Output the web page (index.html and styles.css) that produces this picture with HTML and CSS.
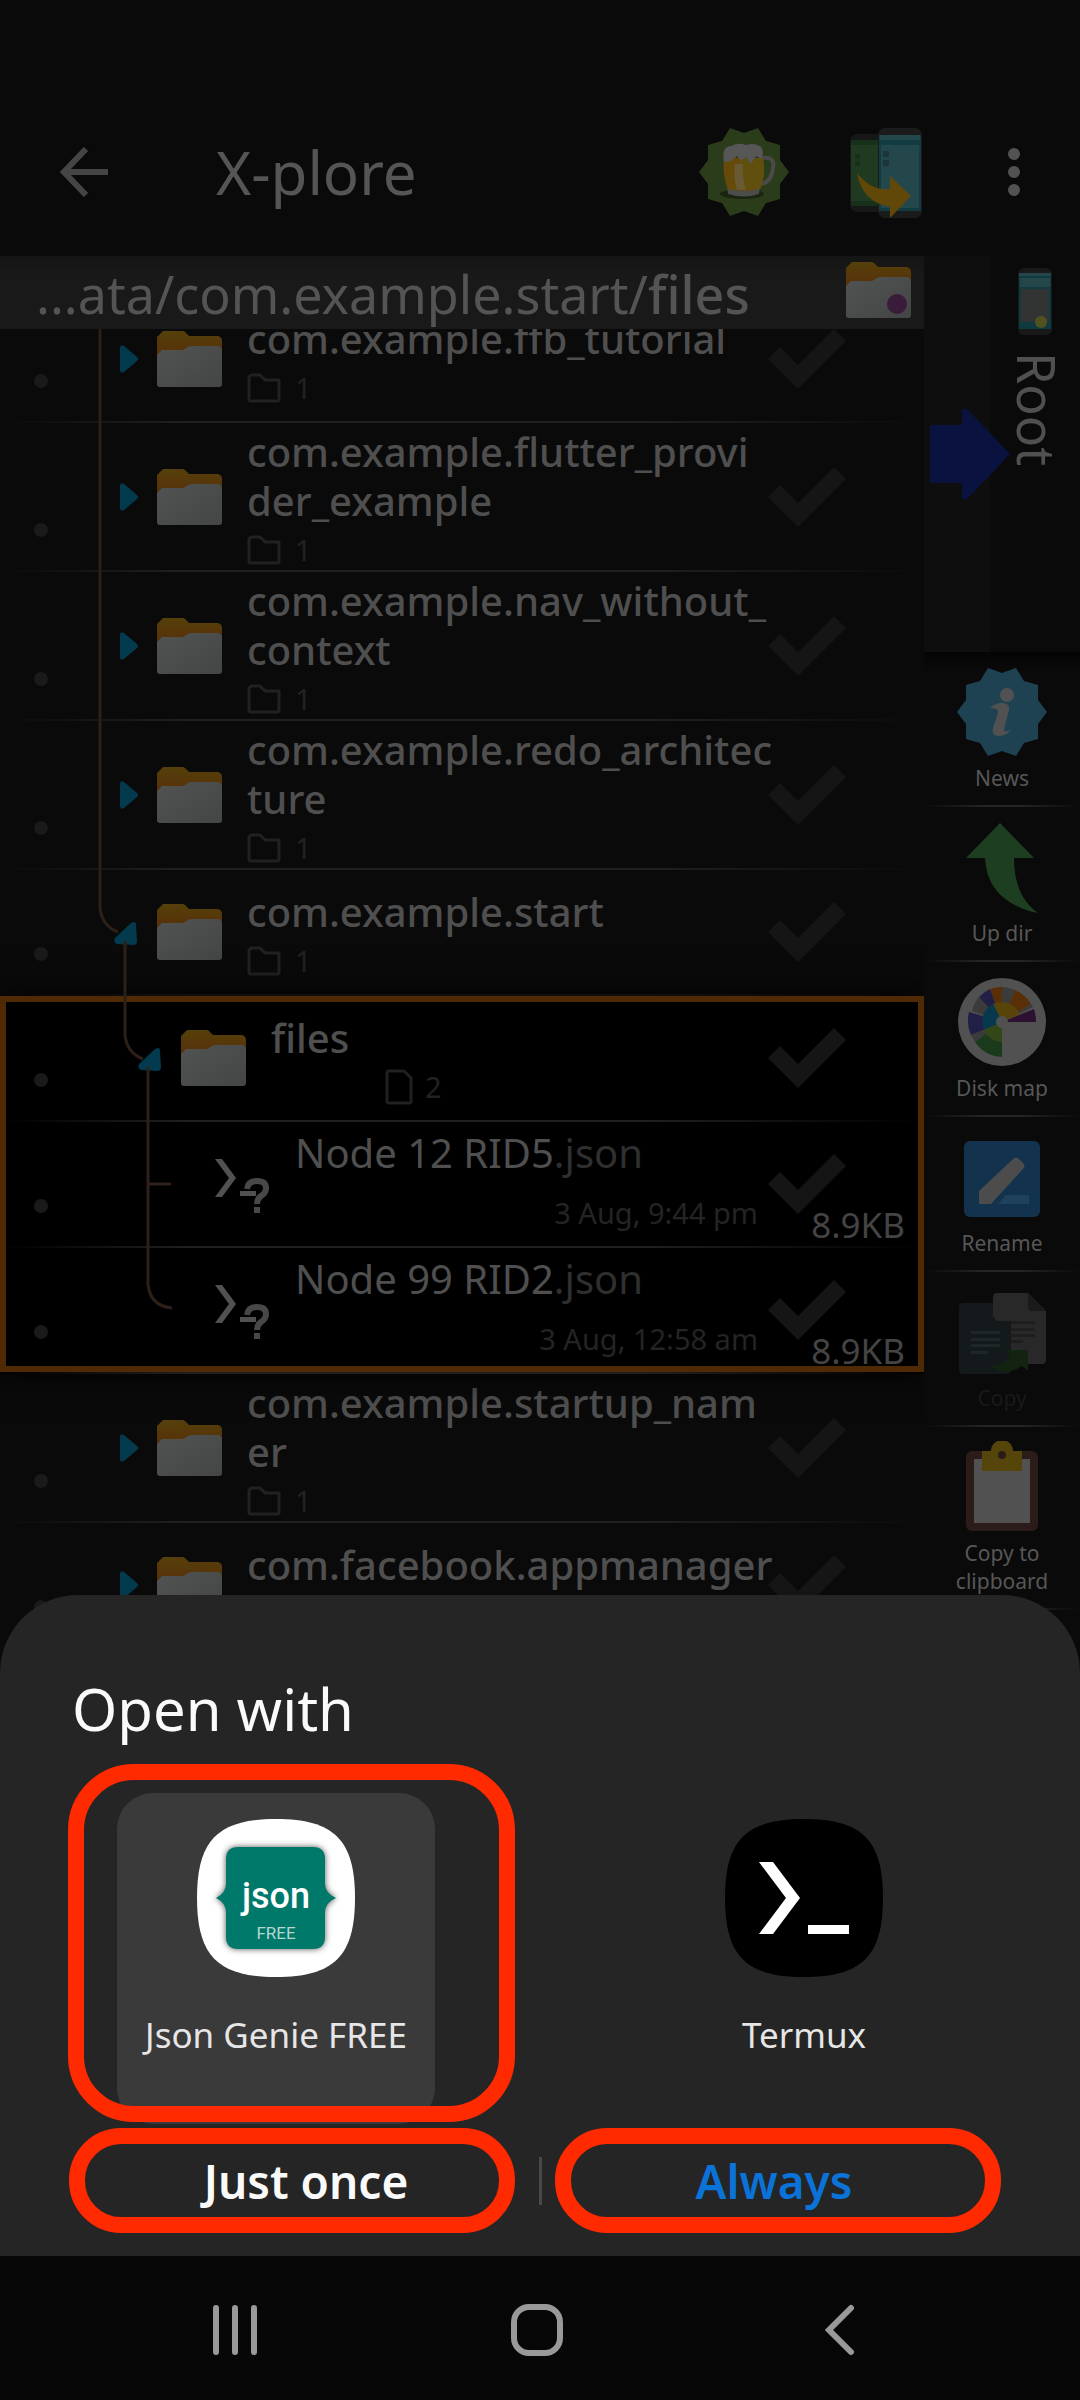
FILE: index.html
```html
<!DOCTYPE html>
<html lang="en">
<head>
<meta charset="utf-8">
<meta name="viewport" content="width=device-width, initial-scale=1">
<title>X-plore</title>
<link rel="stylesheet" href="styles.css">
</head>
<body>
<svg class="defs" aria-hidden="true">
  <defs>
    <linearGradient id="tab" x1="0" y1="0" x2="0" y2="1"><stop offset="0" stop-color="#55400a"/><stop offset="1" stop-color="#58300a"/></linearGradient>
    <linearGradient id="paper" x1="0" y1="0" x2="1" y2="1"><stop offset="0" stop-color="#515252"/><stop offset="1" stop-color="#444545"/></linearGradient>
    <symbol id="folder" viewBox="0 0 65 56">
      <path fill="url(#tab)" d="M0 24V6L6 0h19q2 0 3 1l4 4h29q4 1 4 5v14z"/>
      <path fill="url(#paper)" d="M0 24l5-5h20q2 0 3-1l3-2q2-1 4-1h27l3 3v35q0 3-3 3H3q-3 0-3-3z"/>
    </symbol>
    <symbol id="closed" viewBox="0 0 26 28"><path fill="#033a4d" d="M6 3q0-4 4-2l13 11q2 2 0 4L10 27q-4 2-4-2z"/></symbol>
    <symbol id="open" viewBox="0 0 26 28"><path fill="#033a4d" d="M17 5q5-3 5 2l1 16q0 4-4 4L3 26q-4-2-2-6z"/></symbol>
    <symbol id="check" viewBox="0 0 78 60"><path fill="#151515" d="M0 30l12-12 18 18L66 0l12 12-48 48z"/></symbol>
    <symbol id="minifolder" viewBox="0 0 34 30"><path fill="none" stroke="#212121" stroke-width="3" stroke-linejoin="round" d="M2 4l2-2h9l5 5h14v20l-1 1H3l-1-1z"/></symbol>
    <symbol id="minifile" viewBox="0 0 28 36"><path fill="none" stroke="#212121" stroke-width="3" stroke-linejoin="round" d="M2 3l1-1h16l7 7v24l-1 1H3l-1-1z"/></symbol>
    <symbol id="shellfile" viewBox="0 0 65 64">
      <path fill="#515151" d="M10 3h7l14 19-14 19h-7l14-19zM35 35h16v5H35z"/>
      <path fill="none" stroke="#484848" stroke-width="6" d="M42 33q1-8 10-8 9 0 9 7 0 5-5 8-4 3-4 8M52 51v6"/>
    </symbol>
  </defs>
</svg>

<div class="screen">
  <main class="app">
    <header class="topbar">
      <button class="icon-btn back" aria-label="Back">
        <svg width="48" height="50" viewBox="0 0 48 50"><path fill="none" stroke="#454545" stroke-width="6" d="M26 2L4 25l22 23M4 25h44"/></svg>
      </button>
      <h1>X-plore</h1>
      <button class="icon-btn" aria-label="Donate">
        <svg width="92" height="92" viewBox="-46 -46 92 92">
          <path fill="#2b3c1b" d="M45 0L36 12 36 27 22 31 14 44 0 39-14 44-22 31-36 27-36 12-45 0-36-12-36-27-22-31-14-44 0-39 14-44 22-31 36-27 36-12z"/>
          <ellipse cx="-2" cy="22" rx="22" ry="5" fill="#1a2411"/>
          <path fill="none" stroke="#4a4a49" stroke-width="4" d="M18-14q13-2 11 9-1 15-12 17"/>
          <path fill="#4c4c4c" d="M-17 14h33l-1 8q-15 5-31 0z"/>
          <path fill="#654a0a" d="M-20-14h39q3 18-3 31-18 4-32 0-6-14-4-31z"/>
          <path fill="#61500d" d="M-3-14h22q3 18-3 31H-7z"/>
          <path fill="#6a5a34" d="M-9-8h8q-1 14 3 26h-9q-4-12-2-26z"/>
          <path fill="#575757" d="M-20-10q-3-16 8-16 5-4 14-1 9-3 15 2 3 3 1 12l-6-3-5 8-5-7-5 4-4-5-6 5z"/>
        </svg>
      </button>
      <button class="icon-btn" aria-label="Transfer">
        <svg width="74" height="92" viewBox="0 0 74 92">
          <rect x="1" y="8" width="36" height="78" rx="7" fill="#171717"/>
          <path fill="#1f3a20" d="M2 14h28v66H2z"/><path fill="#17301a" d="M2 14h28v5H2zM2 75h28v5H2z"/>
          <rect x="29" y="2" width="44" height="90" rx="7" fill="#1b1b1b"/>
          <path fill="#123b42" d="M30 9h42v76H30z"/><path fill="#24474b" d="M31 9h40v5H31zM32 19h38v63H32z"/>
          <path fill="#1b3539" d="M34 25h6v6h-6zM34 34h6v6h-6z"/><path fill="#17301a" d="M6 28h5v5H6zM6 35h5v5H6z"/>
          <path fill="#614708" d="M8 47q14 18 33 16V50l21 20-21 22V81Q13 76 8 47z"/>
        </svg>
      </button>
      <button class="icon-btn more" aria-label="More options">
        <svg width="12" height="50" viewBox="0 0 12 50" fill="#525252"><circle cx="6" cy="7" r="6"/><circle cx="6" cy="25" r="6"/><circle cx="6" cy="43" r="6"/></svg>
      </button>
    </header>

    <div class="panes">
      <section class="pane">
        <div class="path">
          <span class="path-text">...ata/com.example.start/<b>files</b></span>
          <svg width="65" height="58" viewBox="0 0 65 58"><use href="#folder" width="65" height="58"/><circle cx="51" cy="43" r="10" fill="#391b3c"/></svg>
        </div>
        <div class="scroller">
          <ul class="list">
            <li class="row">
              <i class="dot"></i><svg class="toggle"><use href="#closed"/></svg><svg class="ico"><use href="#folder"/></svg>
              <div class="text"><div class="name">com.example.ffb_tutorial</div><div class="sub"><svg width="34" height="30"><use href="#minifolder"/></svg>1</div></div>
              <div class="tail"><svg class="check"><use href="#check"/></svg></div>
            </li>
            <li class="row">
              <i class="dot"></i><svg class="toggle"><use href="#closed"/></svg><svg class="ico"><use href="#folder"/></svg>
              <div class="text"><div class="name">com.example.flutter_provi<br>der_example</div><div class="sub"><svg width="34" height="30"><use href="#minifolder"/></svg>1</div></div>
              <div class="tail"><svg class="check"><use href="#check"/></svg></div>
            </li>
            <li class="row">
              <i class="dot"></i><svg class="toggle"><use href="#closed"/></svg><svg class="ico"><use href="#folder"/></svg>
              <div class="text"><div class="name">com.example.nav_without_<br>context</div><div class="sub"><svg width="34" height="30"><use href="#minifolder"/></svg>1</div></div>
              <div class="tail"><svg class="check"><use href="#check"/></svg></div>
            </li>
            <li class="row">
              <i class="dot"></i><svg class="toggle"><use href="#closed"/></svg><svg class="ico"><use href="#folder"/></svg>
              <div class="text"><div class="name">com.example.redo_architec<br>ture</div><div class="sub"><svg width="34" height="30"><use href="#minifolder"/></svg>1</div></div>
              <div class="tail"><svg class="check"><use href="#check"/></svg></div>
            </li>
            <li class="row">
              <i class="dot"></i><svg class="toggle"><use href="#open"/></svg><svg class="ico"><use href="#folder"/></svg>
              <div class="text"><div class="name">com.example.start</div><div class="sub"><svg width="34" height="30"><use href="#minifolder"/></svg>1</div></div>
              <div class="tail"><svg class="check"><use href="#check"/></svg></div>
            </li>
            <li class="current">
              <ul>
                <li class="row level-1">
                  <i class="dot"></i><svg class="toggle"><use href="#open"/></svg><svg class="ico"><use href="#folder"/></svg>
                  <div class="text"><div class="name">files</div><div class="sub files-sub"><svg width="28" height="36"><use href="#minifile"/></svg>2</div></div>
                  <div class="tail"><svg class="check"><use href="#check"/></svg></div>
                </li>
                <li class="row level-2">
                  <i class="dot"></i><span class="toggle"></span><svg class="ico shell"><use href="#shellfile"/></svg>
                  <div class="text file"><div class="name">Node 12 RID5<span class="ext">.json</span></div><div class="date">3 Aug, 9:44 pm</div></div>
                  <div class="tail"><svg class="check"><use href="#check"/></svg><span class="size">8.9KB</span></div>
                </li>
                <li class="row level-2">
                  <i class="dot"></i><span class="toggle"></span><svg class="ico shell"><use href="#shellfile"/></svg>
                  <div class="text file"><div class="name">Node 99 RID2<span class="ext">.json</span></div><div class="date">3 Aug, 12:58 am</div></div>
                  <div class="tail"><svg class="check"><use href="#check"/></svg><span class="size">8.9KB</span></div>
                </li>
              </ul>
            </li>
            <li class="row">
              <i class="dot"></i><svg class="toggle"><use href="#closed"/></svg><svg class="ico"><use href="#folder"/></svg>
              <div class="text"><div class="name">com.example.startup_nam<br>er</div><div class="sub"><svg width="34" height="30"><use href="#minifolder"/></svg>1</div></div>
              <div class="tail"><svg class="check"><use href="#check"/></svg></div>
            </li>
            <li class="row">
              <i class="dot"></i><svg class="toggle"><use href="#closed"/></svg><svg class="ico"><use href="#folder"/></svg>
              <div class="text"><div class="name">com.facebook.appmanager</div><div class="sub"><svg width="34" height="30"><use href="#minifolder"/></svg>1</div></div>
              <div class="tail"><svg class="check"><use href="#check"/></svg></div>
            </li>
          </ul>
          <svg class="tree" width="180" height="1020" viewBox="0 0 180 1020" fill="none" stroke="#2c2019" stroke-width="3">
            <path d="M100 0v611q2 18 18 24M125 644v94q2 18 18 24M148 770v217q2 22 24 24M148 887h23"/>
          </svg>
        </div>
      </section>

      <aside class="side">
        <button class="other" aria-label="Switch to Root pane">
          <span class="strip"></span>
          <span class="label">
            <svg width="34" height="68" viewBox="0 0 34 68">
              <rect width="34" height="67" rx="6" fill="#191919"/><path fill="#0f3a42" d="M1 5h32v56H1z"/><path fill="#25474a" d="M1 5h32v3H1zM2 10h30v9H2z"/><path fill="#323434" d="M3 21h28v33H3z"/><circle cx="23" cy="54" r="6" fill="#525220"/>
            </svg>
            <span class="vertical">Root</span>
          </span>
          <svg class="arrow" width="80" height="90" viewBox="0 0 80 90"><path fill="#0a133f" d="M0 16h32V0h5l43 45-43 45h-5V74H0z"/></svg>
        </button>
        <nav class="tools">
          <button class="tool">
            <svg width="92" height="92" viewBox="-46 -46 92 92">
              <path fill="#1f4253" d="M45 0L36 12 36 27 22 31 14 44 0 39-14 44-22 31-36 27-36 12-45 0-36-12-36-27-22-31-14-44 0-39 14-44 22-31 36-27 36-12z"/>
              <circle cx="5" cy="-17" r="7" fill="#515151"/><path fill="#515151" d="M-12-4Q-7-9 0-9q8 0 7 7L2 17q-1 4 7 1-5 6-13 6-7-1-5-8l5-15q1-5-8-5z"/>
            </svg>News</button>
          <button class="tool">
            <svg width="92" height="92" viewBox="0 0 92 92"><path fill="#1d3e20" d="M44 2l34 35H58q0 38 24 55Q31 81 29 37H10z"/></svg>Up dir</button>
          <button class="tool">
            <svg width="92" height="92" viewBox="-46 -46 92 92">
              <circle r="44" fill="#515151"/>
              <path fill="#582f06" d="M0 0L-12-33A35 35 0 0 1 0-35zM0 0L13-32A35 35 0 0 1 29-18z"/>
              <path fill="#3b3b3b" d="M0 0V-35A35 35 0 0 1 13-32zM0 0L29-18 31-15zM0 0L-30-11A35 35 0 0 1-23-25zM0 0L-31 13-27 20z"/>
              <path fill="#221f46" d="M0 0L-12-33A35 35 0 0 0-23-25zM0 0L-33-10A35 35 0 0 0-31 13z"/>
              <path fill="#2e1033" d="M0 0H34Q34-7 32-13z"/>
              <path fill="#1a3b1b" d="M0 0L-27 20A35 35 0 0 0 0 35z"/>
              <path fill="#58430a" d="M0 0L-9-18A20 20 0 0 1 18-8z"/><path fill="#07394c" d="M0 0L-9-18A20 20 0 0 0-18 8z"/><path fill="#344719" d="M0 0L-18 8A20 20 0 0 0 0 20z"/>
              <circle r="6" fill="#515151"/>
            </svg>Disk map</button>
          <button class="tool">
            <svg width="92" height="92" viewBox="0 0 92 92"><rect x="8" y="10" width="76" height="76" rx="6" fill="#12324d"/><path fill="#4c4c4c" d="M23 60l34-32q3-3 6 0l4 4q3 3 0 6L35 73H23z"/><path fill="#20415c" d="M50 64h23v9H42z"/></svg>Rename</button>
          <button class="tool" disabled>
            <svg width="92" height="92" viewBox="0 0 92 92">
              <path fill="#282828" d="M37 11q0-4 4-4h31l18 18v49q0 4-4 4H41q-4 0-4-4z"/><path fill="#1b1b1b" d="M72 7l18 18H76q-4 0-4-4z"/>
              <path fill="#1e1e1e" d="M54 35h25v3H54zM54 42h25v3H54zM54 48h25v3H54zM54 54h13v3H54z"/>
              <path fill="#14191b" d="M3 21q0-4 4-4h30v13l4 5h14v49q0 4-4 4H7q-4 0-4-4z"/><path fill="#1f2628" d="M15 45h29v3H15zM15 52h29v3H15zM15 58h29v3H15zM15 65h17v3H15z"/>
              <path fill="#12240f" d="M34 80q18-2 20-11l-4-5h22v21l-6-5Q50 91 34 80z"/>
            </svg>Copy</button>
          <button class="tool">
            <svg width="92" height="92" viewBox="0 0 92 92"><rect x="10" y="10" width="72" height="80" rx="6" fill="#2b1c19"/><path fill="#515151" d="M18 18h56v64H18z"/><path fill="#56450a" d="M26 10h9a11 11 0 0 1 22 0h9v20H26z"/><circle cx="46" cy="14" r="4" fill="#2b1c19"/></svg>Copy to<br>clipboard</button>
        </nav>
      </aside>
    </div>

    <section class="sheet" role="dialog" aria-labelledby="sheet-title">
      <h2 id="sheet-title">Open with</h2>
      <div class="apps">
        <div class="cell marked">
          <button class="app-card selected">
            <svg width="158" height="158" viewBox="0 0 158 158">
              <path fill="#fff" d="M79 0c58 0 79 21 79 79s-21 79-79 79S0 137 0 79 21 0 79 0z"/>
              <path class="json-shape" fill="#00796b" d="M41 28h75q12 0 12 12v25q0 9 11 14-11 5-11 14v25q0 12-12 12H41q-12 0-12-12V93q0-9-10-14 10-5 10-14V40q0-12 12-12z"/>
              <text class="json-text" x="79" y="89">json</text><text class="json-free" x="79" y="120">FREE</text>
            </svg>
            <span>Json Genie FREE</span>
          </button>
        </div>
        <div class="cell">
          <button class="app-card">
            <svg width="158" height="158" viewBox="0 0 158 158">
              <path fill="#000" d="M79 0c58 0 79 21 79 79s-21 79-79 79S0 137 0 79 21 0 79 0z"/>
              <path fill="#fff" d="M34 43h14l27 36-27 36H34l27-36zM83 106h41v9H83z"/>
            </svg>
            <span>Termux</span>
          </button>
        </div>
      </div>
      <div class="choices">
        <button class="once">Just once</button>
        <button class="always">Always</button>
      </div>
    </section>
  </main>

  <nav class="navbar">
    <button aria-label="Recent apps"><svg width="48" height="52" viewBox="0 0 48 52" stroke="#999" stroke-width="6" stroke-linecap="round"><path d="M5 4v44M24 4v44M43 4v44"/></svg></button>
    <button aria-label="Home"><svg width="52" height="52" viewBox="0 0 52 52"><rect x="3" y="3" width="46" height="46" rx="15" fill="none" stroke="#999" stroke-width="6"/></svg></button>
    <button aria-label="Back"><svg width="30" height="52" viewBox="0 0 30 52"><path fill="none" stroke="#999" stroke-width="6" stroke-linecap="round" d="M26 4L4 26l22 22"/></svg></button>
  </nav>
</div>
</body>
</html>
```

FILE: styles.css
```css
* { box-sizing: border-box; }

body {
  margin: 0;
  background: #0a0a0a;
  color: #4f4f4f;
  font-family: "Noto Sans", "Open Sans", sans-serif;
}

button {
  border: 0;
  padding: 0;
  background: none;
  color: inherit;
  font: inherit;
}

svg { display: block; flex: none; }
ul { list-style: none; margin: 0; padding: 0; }

.defs { position: absolute; width: 0; height: 0; }

.screen {
  display: flex;
  flex-direction: column;
  height: 100vh;
}

.app {
  position: relative;
  display: flex;
  flex: 1;
  flex-direction: column;
  min-height: 0;
  overflow: hidden;
}

/* Title bar */
.topbar {
  display: flex;
  flex: none;
  align-items: center;
  padding: 88px 9px 0 0;
}

.icon-btn {
  display: flex;
  align-items: center;
  justify-content: center;
  width: 142px;
  height: 168px;
}

.icon-btn.back { width: 168px; }
.icon-btn.more { width: 114px; }

h1 {
  flex: 1;
  margin: 0 0 0 48px;
  font-size: 60px;
  font-weight: 400;
  line-height: 80px;
  color: #555;
}

/* File pane */
.panes {
  display: flex;
  flex: 1;
  min-height: 0;
}

.pane {
  display: flex;
  flex: 1;
  flex-direction: column;
  min-width: 0;
}

.path {
  display: flex;
  flex: none;
  align-items: center;
  justify-content: space-between;
  height: 73px;
  padding: 0 13px 0 36px;
  background: linear-gradient(#151515, #191919 20px);
}

.path svg { margin-bottom: 6px; }

.path-text {
  padding-top: 3px;
  font-size: 52px;
  line-height: 70px;
  color: #545454;
  white-space: nowrap;
}

.path-text b { font-weight: 500; }

.scroller {
  position: relative;
  flex: 1;
  min-height: 0;
  overflow: hidden;
}

.list { margin-top: -32px; }

.row {
  display: flex;
  align-items: center;
  min-height: 126px;
  padding-bottom: 2px;
  background: linear-gradient(90deg, transparent, #202020 20%, #202020 70%, transparent) bottom / 100% 2px no-repeat;
}

.dot {
  flex: none;
  align-self: flex-end;
  width: 14px;
  height: 14px;
  margin: 0 66px 33px 34px;
  border-radius: 50%;
  background: #1a1a1a;
}

.toggle { flex: none; width: 26px; height: 28px; margin-right: 17px; }
.level-1 .toggle { margin-left: 24px; }
.level-2 .toggle { margin-left: 48px; }
.ico { width: 65px; height: 56px; margin-right: 25px; }
.ico.shell { height: 64px; margin-top: 8px; }

.text {
  flex: 1;
  min-width: 0;
  padding-top: 4px;
}

.name {
  font-size: 40px;
  font-weight: 500;
  line-height: 49px;
  color: #4f4f4f;
  white-space: nowrap;
}

.file .name { font-weight: 400; }
.ext { color: #2f2f2f; }

.sub {
  display: flex;
  align-items: center;
  gap: 14px;
  height: 41px;
  margin-top: 4px;
  font-size: 29px;
  color: #222;
}

.files-sub { gap: 12px; padding-left: 114px; }

.text.file { padding: 0 0 4px; }

.date {
  margin-top: 12px;
  font-size: 29px;
  line-height: 48px;
  text-align: right;
  color: #242424;
}

.tail {
  display: grid;
  flex: none;
  align-self: stretch;
  width: 137px;
  margin: 0 19px 0 10px;
}

.check { grid-area: 1 / 1; align-self: center; width: 78px; height: 60px; }

.size {
  grid-area: 1 / 1;
  align-self: end;
  justify-self: end;
  font-size: 35px;
  line-height: 42px;
  color: #444;
}

.current {
  position: relative;
  background: #000;
  box-shadow: 0 0 30px #000;
}

.current::after {
  content: "";
  position: absolute;
  inset: 0 0 2px;
  border: 6px solid #4f2a04;
}

.tree { position: absolute; top: -32px; left: 0; }

/* Right side */
.side {
  display: flex;
  flex: none;
  flex-direction: column;
  width: 156px;
}

.other {
  position: relative;
  display: flex;
  flex: none;
  height: 396px;
}

.strip { width: 66px; height: 100%; background: #0e0e0e; }

.label {
  display: flex;
  flex: 1;
  flex-direction: column;
  align-items: center;
  padding: 12px 0 0;
}

.vertical {
  margin: 16px 0 0 4px;
  writing-mode: vertical-rl;
  font-size: 52px;
  line-height: 60px;
  color: #505050;
}

.arrow { position: absolute; left: 6px; top: 153px; }

.tools {
  display: flex;
  flex-direction: column;
  background: linear-gradient(#040404, #0a0a0a 20px);
}

.tool {
  display: flex;
  flex-direction: column;
  align-items: center;
  gap: 6px;
  padding: 14px 0 15px;
  background: linear-gradient(90deg, transparent, #262626 40%, #262626 60%, transparent) bottom / 100% 2px no-repeat;
  font-size: 21px;
  line-height: 28px;
  text-align: center;
  color: #575757;
}

.tool:disabled { color: #191919; }

/* Open-with sheet */
.sheet {
  position: absolute;
  right: 0;
  bottom: 0;
  left: 0;
  padding: 76px 0 23px;
  border-radius: 78px 78px 0 0;
  background: #252525;
}

h2 {
  margin: 0 0 46px;
  padding: 0 72px;
  font-size: 58px;
  font-weight: 400;
  line-height: 76px;
  color: #fafafa;
}

.apps {
  display: grid;
  grid-template-columns: 1fr 1fr;
  padding: 0 12px;
}

.cell { position: relative; display: flex; justify-content: center; }

.app-card {
  display: flex;
  flex-direction: column;
  align-items: center;
  gap: 35px;
  width: 318px;
  height: 331px;
  padding-top: 26px;
  border-radius: 36px;
  font-size: 35px;
  line-height: 46px;
  color: #e6e6e6;
}

.selected { background: #3a3a3a; }

.json-shape { filter: drop-shadow(0 0 3px #555); }
.json-text { fill: #fff; font: 500 36px Roboto, sans-serif; text-anchor: middle; }
.json-free { fill: #b5d6d2; font: 400 17px Roboto, sans-serif; text-anchor: middle; }

/* Red callouts round the choices */
.marked::after,
.once::after,
.always::after {
  content: "";
  position: absolute;
  border: 16px solid #ff2a00;
}

.marked::after { inset: -29px 25px 2px 56px; border-radius: 66px; }
.once::after { inset: 0 25px 0 -3px; border-radius: 52px; }
.always::after { inset: 0 7px 0 15px; border-radius: 52px; }

.choices {
  display: grid;
  grid-template-columns: 1fr 1fr;
  margin-top: 4px;
  padding: 0 72px;
  background: linear-gradient(#484848, #484848) center / 3px 48px no-repeat;
}

.choices button {
  position: relative;
  height: 105px;
  font-size: 46px;
  font-weight: 600;
  line-height: 60px;
}

.choices .once { color: #fafafa; }
.choices .always { color: #0b72d8; }

/* System navigation */
.navbar {
  display: grid;
  flex: none;
  grid-template-columns: repeat(3, 1fr);
  height: 144px;
  padding: 0 89px 0 84px;
  background: #070707;
}

.navbar button { display: flex; align-items: center; justify-content: center; padding-top: 4px; }
```
